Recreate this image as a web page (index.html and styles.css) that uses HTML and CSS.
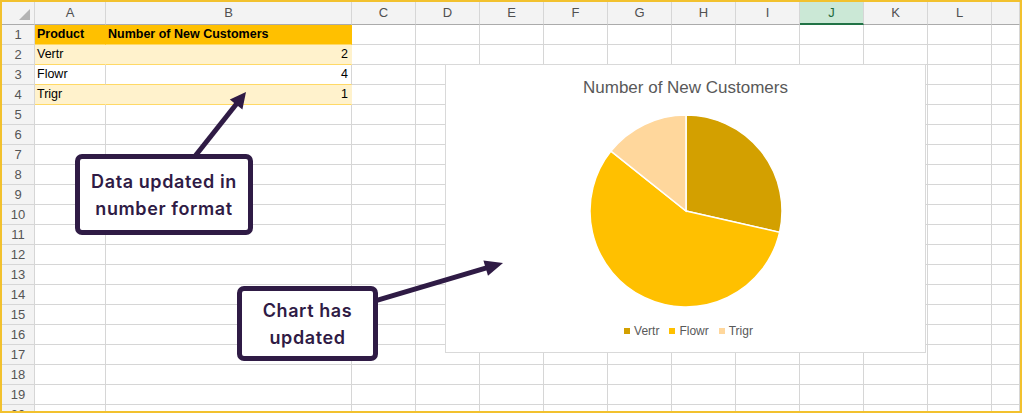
FILE: index.html
```html
<!DOCTYPE html>
<html lang="en">
<head>
    <meta charset="UTF-8">
    <meta name="viewport" content="width=device-width, initial-scale=1.0">
    <title>Number of New Customers</title>
    <link rel="stylesheet" href="styles.css">
</head>
<body>
    <div class="sheet">
        <div class="row head">
            <div class="corner"><svg width="12" height="12" viewBox="0 0 12 12"><polygon points="0,11 11,0 11,11" fill="#b4b4b4"/></svg></div>
            <div>A</div><div>B</div><div>C</div><div>D</div><div>E</div><div>F</div><div>G</div>
            <div>H</div><div>I</div><div class="sel">J</div><div>K</div><div>L</div><div></div>
        </div>
        <div class="row">
            <div class="num">1</div>
            <div class="c top">Product</div><div class="c top">Number of New Customers</div>
            <div></div><div></div><div></div><div></div><div></div><div></div><div></div><div></div><div></div><div></div><div></div>
        </div>
        <div class="row">
            <div class="num">2</div>
            <div class="c band">Vertr</div><div class="c band val">2</div>
            <div></div><div></div><div></div><div></div><div></div><div></div><div></div><div></div><div></div><div></div><div></div>
        </div>
        <div class="row">
            <div class="num">3</div>
            <div class="c plain">Flowr</div><div class="c plain val">4</div>
            <div></div><div></div><div></div><div></div><div></div><div></div><div></div><div></div><div></div><div></div><div></div>
        </div>
        <div class="row">
            <div class="num">4</div>
            <div class="c band">Trigr</div><div class="c band val">1</div>
            <div></div><div></div><div></div><div></div><div></div><div></div><div></div><div></div><div></div><div></div><div></div>
        </div>
        <div id="empty-rows"></div>

        <div class="chart">
            <div class="chart-title">Number of New Customers</div>
            <svg class="pie" width="194" height="194" viewBox="0 0 194 194">
                <path d="M97,97 L97,1 A96,96 0 0 1 190.59,118.36 Z" fill="#d3a000" stroke="#fff" stroke-width="1.5"/>
                <path d="M97,97 L190.59,118.36 A96,96 0 1 1 21.95,37.14 Z" fill="#ffc000" stroke="#fff" stroke-width="1.5"/>
                <path d="M97,97 L21.95,37.14 A96,96 0 0 1 97,1 Z" fill="#ffd79c" stroke="#fff" stroke-width="1.5"/>
            </svg>
            <div class="legend">
                <span class="key"><i class="sw vertr"></i>Vertr</span>
                <span class="key"><i class="sw flowr"></i>Flowr</span>
                <span class="key"><i class="sw trigr"></i>Trigr</span>
            </div>
        </div>

        <svg class="arrows" width="1018" height="409" viewBox="2 2 1018 409">
            <line x1="192" y1="160" x2="238" y2="102" stroke="#2f1b45" stroke-width="5"/>
            <polygon points="246,92 242.4,109.6 229.8,99.6" fill="#2f1b45"/>
            <line x1="370" y1="302.4" x2="489" y2="267.2" stroke="#2f1b45" stroke-width="5"/>
            <polygon points="503,263 488,275.8 483.4,260.4" fill="#2f1b45"/>
        </svg>

        <div class="callout note-data">Data updated in<br>number format</div>
        <div class="callout note-chart">Chart has<br>updated</div>
    </div>

    <script>
        // rows 5..20 are empty grid rows
        const holder = document.getElementById('empty-rows');
        for (let r = 5; r <= 20; r++) {
            const row = document.createElement('div');
            row.className = 'row';
            let html = '<div class="num">' + r + '</div>';
            for (let c = 0; c < 13; c++) {
                html += '<div></div>';
            }
            row.innerHTML = html;
            holder.appendChild(row);
        }
    </script>
</body>
</html>
```
FILE: styles.css
```css
body {
    margin: 0;
    font-family: "Liberation Sans", Arial, sans-serif;
    background-color: #fff;
}
.sheet {
    position: relative;
    width: 1022px;
    height: 413px;
    box-sizing: border-box;
    border: 2px solid #f2c12e;
    overflow: hidden;
}
.row {
    display: grid;
    grid-template-columns: 33px 71px 246px repeat(10, 64px) 1fr;
    height: 20px;
}
.row > div {
    box-sizing: border-box;
    border-right: 1px solid #d6d6d6;
    border-bottom: 1px solid #d6d6d6;
    font-size: 12.5px;
    line-height: 19px;
    white-space: nowrap;
    overflow: hidden;
}
.head {
    height: 23px;
    background-color: #f3f3f3;
}
.head > div {
    text-align: center;
    line-height: 22px;
    font-size: 13px;
    color: #505050;
    border-bottom-color: #ababab;
}
.head .corner {
    display: flex;
    align-items: flex-end;
    justify-content: flex-end;
    padding: 0 3px 3px 0;
}
.head .sel {
    background-color: #cbe8d6;
    color: #1f6b3d;
    border-bottom: 2px solid #217346;
}
.row .num {
    background-color: #f3f3f3;
    text-align: center;
    font-size: 13px;
    color: #555;
}
.c {
    padding: 0 3px 0 2px;
    color: #000;
}
.row .top {
    background-color: #ffc000;
    font-weight: bold;
    border-right-color: #ffc000;
    border-bottom-color: #ffd966;
}
.row .band {
    background-color: #fff2cc;
    border-right-color: #fff2cc;
    border-bottom-color: #ffd966;
}
.row .plain {
    border-bottom-color: #ffd966;
}
.val {
    text-align: right;
}

.chart {
    position: absolute;
    left: 443px;
    top: 62px;
    width: 481px;
    height: 289px;
    box-sizing: border-box;
    border: 1px solid #d9d9d9;
    background-color: #fff;
    display: flex;
    flex-direction: column;
    align-items: center;
    padding-top: 12px;
}
.chart-title {
    font-size: 17px;
    line-height: 22px;
    color: #595959;
}
.pie {
    margin-top: 15px;
}
.legend {
    display: flex;
    gap: 10px;
    margin-top: 15px;
    margin-left: 6px;
    font-size: 12px;
    line-height: 16px;
    color: #595959;
}
.key {
    display: flex;
    align-items: center;
}
.sw {
    width: 6px;
    height: 6px;
    margin-right: 4px;
}
.vertr { background-color: #d3a000; }
.flowr { background-color: #ffc000; }
.trigr { background-color: #ffd79c; }

.arrows {
    position: absolute;
    left: 0;
    top: 0;
}
.callout {
    position: absolute;
    box-sizing: border-box;
    border: 5px solid #2f1b45;
    border-radius: 7px;
    background-color: #fff;
    display: flex;
    align-items: center;
    justify-content: center;
    text-align: center;
    font-family: Inter, "Noto Sans", sans-serif;
    font-weight: 600;
    font-size: 18px;
    letter-spacing: 0.6px;
    line-height: 27px;
    color: #2f1b45;
}
.note-data {
    left: 73px;
    top: 152px;
    width: 178px;
    height: 81px;
}
.note-chart {
    left: 235px;
    top: 284px;
    width: 141px;
    height: 75px;
}
```
